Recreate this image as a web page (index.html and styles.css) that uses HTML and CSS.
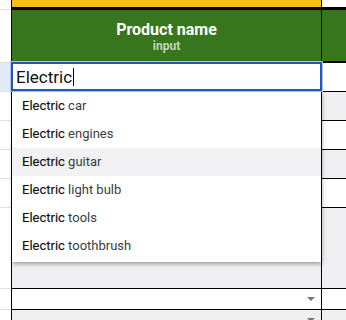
FILE: index.html
```html
<!DOCTYPE html>
<html lang="en">
<head>
    <meta charset="UTF-8">
    <meta name="viewport" content="width=device-width, initial-scale=1.0">
    <title>Product name - autocomplete</title>
    <link rel="stylesheet" href="styles.css">
</head>
<body>
    <div class="sheet">
        <div class="row row-top">
            <div class="cell gutter"></div>
            <div class="cell main yellow"></div>
            <div class="cell side"></div>
        </div>
        <div class="row row-head">
            <div class="cell gutter"></div>
            <div class="cell main green">
                <span class="head-title">Product name</span>
                <span class="head-sub">input</span>
            </div>
            <div class="cell side green"></div>
        </div>
        <div class="row">
            <div class="cell gutter active"></div>
            <div class="cell main"></div>
            <div class="cell side"></div>
        </div>
        <div class="row band">
            <div class="cell gutter"></div>
            <div class="cell main"></div>
            <div class="cell side"></div>
        </div>
        <div class="row">
            <div class="cell gutter"></div>
            <div class="cell main"></div>
            <div class="cell side"></div>
        </div>
        <div class="row band">
            <div class="cell gutter"></div>
            <div class="cell main"></div>
            <div class="cell side"></div>
        </div>
        <div class="row">
            <div class="cell gutter"></div>
            <div class="cell main"></div>
            <div class="cell side"></div>
        </div>
        <div class="row band row-tall">
            <div class="cell gutter"></div>
            <div class="cell main"></div>
            <div class="cell side"></div>
        </div>
        <div class="row row-small">
            <div class="cell gutter"></div>
            <div class="cell main"><span class="arrow"></span></div>
            <div class="cell side"></div>
        </div>
        <div class="row band row-small">
            <div class="cell gutter"></div>
            <div class="cell main"><span class="arrow"></span></div>
            <div class="cell side"></div>
        </div>

        <!-- cell editor -->
        <div class="editor">
            <span class="editor-text">Electric</span><span class="caret"></span>
        </div>

        <!-- autocomplete list -->
        <ul class="suggest">
            <li><b>Electric</b> car</li>
            <li><b>Electric</b> engines</li>
            <li class="hover"><b>Electric</b> guitar</li>
            <li><b>Electric</b> light bulb</li>
            <li><b>Electric</b> tools</li>
            <li><b>Electric</b> toothbrush</li>
        </ul>
    </div>
</body>
</html>
```

FILE: styles.css
```css
body {
    margin: 0;
    font-family: Roboto, "Liberation Sans", Arial, sans-serif;
    background-color: #fff;
    overflow: hidden;
}

.sheet {
    position: relative;
    width: 346px;
    height: 320px;
}

.row {
    display: flex;
    height: 29px;
}

.cell {
    box-sizing: border-box;
    height: 100%;
    border-bottom: 1px solid #000;
}

.gutter {
    width: 11px;
    border-bottom-color: #e0e0e0;
}

.gutter.active {
    background-color: #e2eaf8;
}

.main {
    position: relative;
    width: 311px;
    border-left: 1px solid #000;
    border-right: 1px solid #000;
}

.side {
    flex: 1;
}

.band .main,
.band .side {
    background-color: #efeff1;
}

.row-top {
    height: 10px;
}

.row-top .main,
.row-top .side {
    border-bottom-width: 3px;
}

.yellow {
    background-color: #f8bd16;
}

.row-head {
    height: 53px;
}

.row-head .main,
.row-head .side {
    border-bottom-width: 2px;
}

.green {
    background-color: #38761d;
}

.row-head .main {
    display: flex;
    flex-direction: column;
    align-items: center;
    padding-top: 10px;
}

.head-title {
    color: #fff;
    font-size: 16px;
    font-weight: bold;
    line-height: 19px;
}

.head-sub {
    color: #c3d8b8;
    font-size: 12px;
    font-weight: bold;
    line-height: 14px;
}

.row-tall {
    height: 81px;
}

.row-small {
    height: 21px;
}

.arrow {
    position: absolute;
    right: 6px;
    top: 8px;
    width: 0;
    height: 0;
    border-left: 4px solid transparent;
    border-right: 4px solid transparent;
    border-top: 4px solid #777;
}

.editor {
    position: absolute;
    left: 11px;
    top: 62px;
    width: 311px;
    height: 29px;
    box-sizing: border-box;
    border: 2px solid #2458b8;
    box-shadow: 0 0 0 1px #a9c3ee;
    background-color: #fff;
    display: flex;
    align-items: center;
    padding-left: 3px;
}

.editor-text {
    font-size: 17px;
    color: #111;
}

.caret {
    width: 1px;
    height: 18px;
    background-color: #000;
    margin-left: 1px;
}

.suggest {
    position: absolute;
    left: 12px;
    top: 92px;
    width: 309px;
    margin: 0;
    padding: 0 0 2px;
    list-style: none;
    background-color: #fff;
    box-shadow: 1px 2px 4px rgba(0, 0, 0, 0.35);
}

.suggest li {
    height: 28px;
    line-height: 28px;
    padding-left: 10px;
    font-size: 13px;
    color: #3c3c3c;
}

.suggest li b {
    font-weight: normal;
    color: #111;
    -webkit-text-stroke: 0.15px #111;
}

.suggest li.hover {
    background-color: #f1f1f3;
}
```
